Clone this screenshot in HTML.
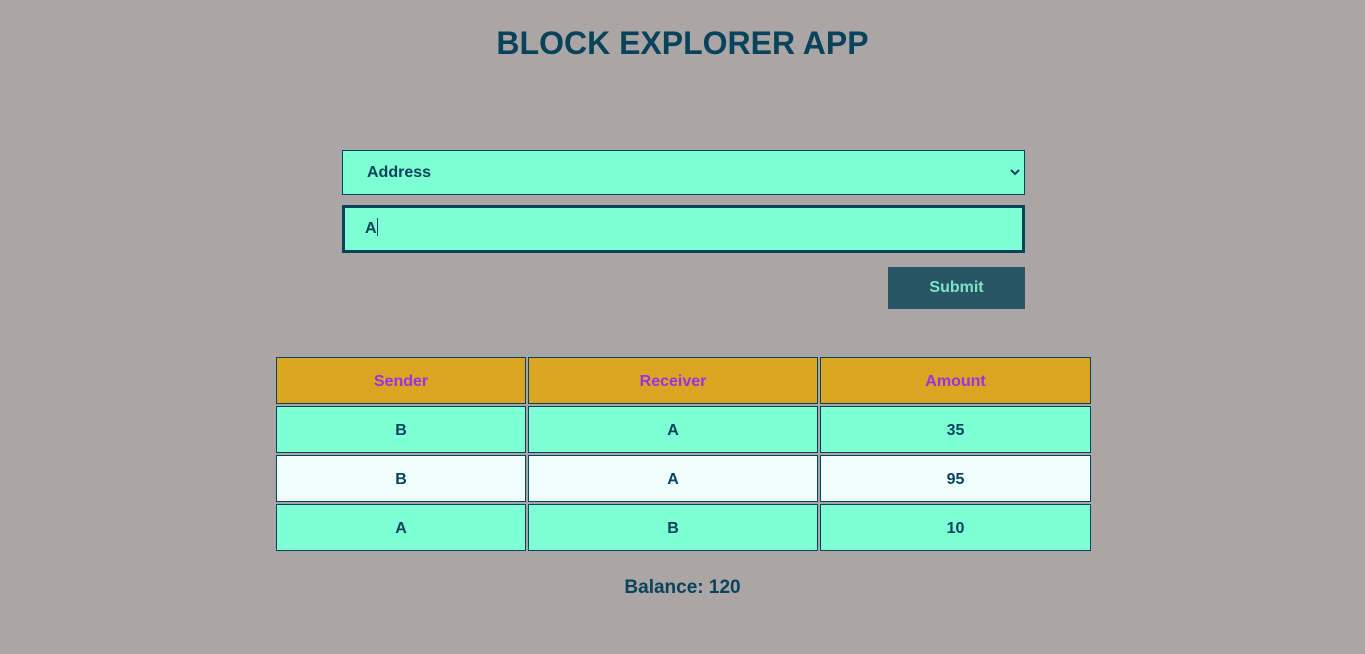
<!DOCTYPE html>
<html><head><meta charset="utf-8"><style>
*{box-sizing:border-box;margin:0;padding:0}
body{width:1365px;height:654px;background:#aba5a5;font-family:"Liberation Sans",Arial,sans-serif;position:relative;overflow:hidden;color:#07435a}
.abs{position:absolute}
h1{position:absolute;left:0;width:1365px;top:25px;text-align:center;font-size:32px;font-weight:bold;color:#07435a}
.sel{left:342px;top:150px;width:683px;height:45px;background:#7fffd4;border:1px solid #07435a;font-weight:bold;font-size:16px;line-height:43px;padding-left:24px}
.inp{left:342px;top:205px;width:683px;height:48px;background:#7fffd4;border:3px solid #07435a;font-weight:bold;font-size:16px;line-height:42px;padding-left:20px}
.btn{left:888px;top:267px;width:137px;height:42px;background:#285563;color:#7fe3c8;font-weight:bold;font-size:16px;text-align:center;line-height:42px}
.c{position:absolute;height:47px;border:1px solid #07435a;text-align:center;line-height:47px;font-weight:bold;font-size:16px;color:#07435a}
.h{background:#daa520;color:#9b30e8}
.a{background:#7fffd4}
.w{background:#f0fffe}
.bal{left:0;width:1365px;top:577px;text-align:center;font-weight:bold;font-size:19px}
</style></head><body>
<h1>BLOCK EXPLORER APP</h1>
<div class="abs sel">Address
<svg class="abs" style="right:4px;top:17px" width="10" height="8" viewBox="0 0 10 8"><path d="M1 2 L5 6 L9 2" stroke="#07435a" stroke-width="2" fill="none"/></svg></div>
<div class="abs inp">A<span style="display:inline-block;width:1px;height:18px;background:#07435a;vertical-align:-3px"></span></div>
<div class="abs btn">Submit</div>

<div class="c h" style="left:276px;top:357px;width:250px">Sender</div>
<div class="c h" style="left:528px;top:357px;width:290px">Receiver</div>
<div class="c h" style="left:820px;top:357px;width:271px">Amount</div>

<div class="c a" style="left:276px;top:406px;width:250px">B</div>
<div class="c a" style="left:528px;top:406px;width:290px">A</div>
<div class="c a" style="left:820px;top:406px;width:271px">35</div>

<div class="c w" style="left:276px;top:455px;width:250px">B</div>
<div class="c w" style="left:528px;top:455px;width:290px">A</div>
<div class="c w" style="left:820px;top:455px;width:271px">95</div>

<div class="c a" style="left:276px;top:504px;width:250px">A</div>
<div class="c a" style="left:528px;top:504px;width:290px">B</div>
<div class="c a" style="left:820px;top:504px;width:271px">10</div>

<div class="abs bal">Balance: 120</div>
</body></html>
